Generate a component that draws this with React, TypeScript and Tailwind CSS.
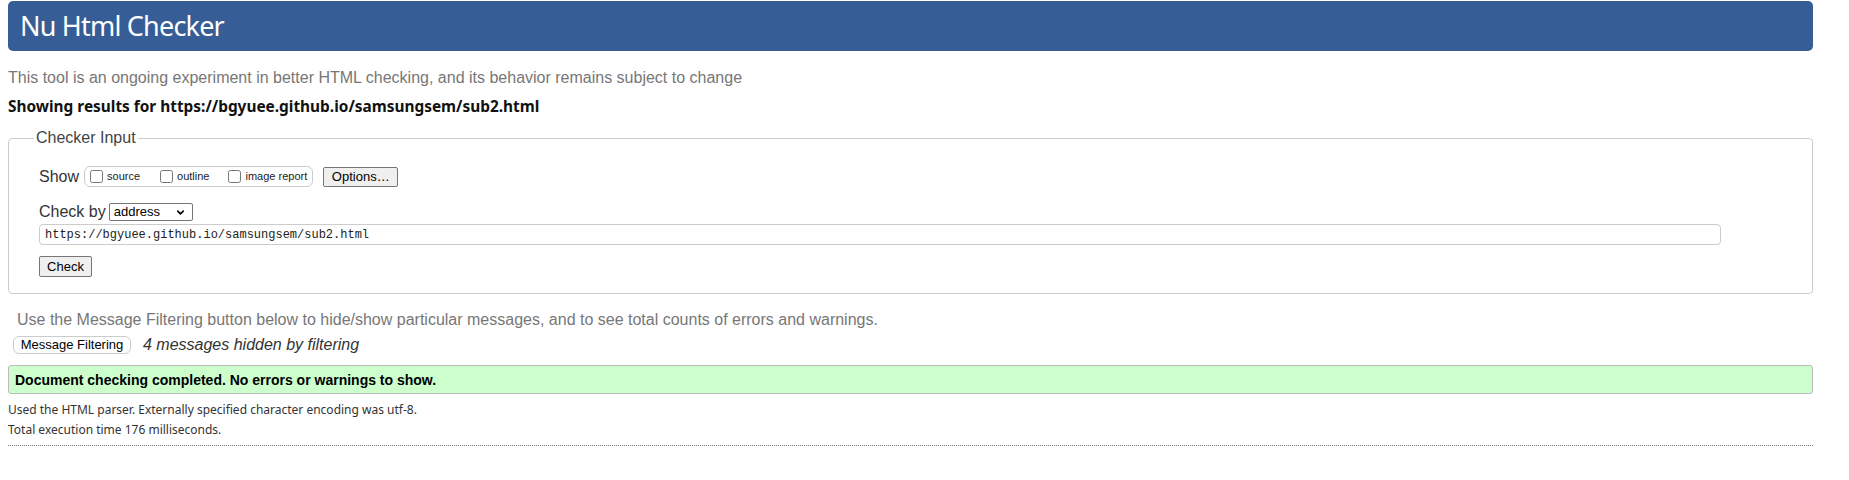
import { ChevronDown } from "lucide-react";

const arial = "font-['Liberation_Sans',Arial,sans-serif]";
const gothic = "font-['Noto_Sans','Noto_Sans_CJK_KR',sans-serif]";

function Box({ label }: { label: string }) {
  return (
    <label className="flex items-center">
      <input type="checkbox" className="m-0 h-[13px] w-[13px]" />
      <span className="ml-[4px] text-[11px] leading-[13px] text-[#222]">{label}</span>
    </label>
  );
}

export default function App() {
  return (
    <div className={`${arial} ml-2 w-[1805px] pt-px text-[#333]`}>
      <h1
        className={`${gothic} flex h-[50px] items-center rounded-[5px] bg-[#365d95] pl-[12px] text-[27px] font-normal tracking-[-0.8px] text-white`}
      >
        Nu Html Checker
      </h1>

      <p className="mt-[18px] text-[16px] leading-[18px] text-[#777]">
        This tool is an ongoing experiment in better HTML checking, and its behavior remains subject to change
      </p>
      <p className={`${gothic} mt-[10px] text-[15.4px] font-bold leading-[20px] text-[#111]`}>
        Showing results for https://bgyuee.github.io/samsungsem/sub2.html
      </p>

      <fieldset className="mt-[12px] rounded-[4px] border border-[#ccc] pb-[16px] pl-[30px]">
        <legend className="ml-[-5px] px-[2px] text-[16px] leading-[18px] text-[#444]">Checker Input</legend>

        <div className="mt-[19px] flex h-[21px] items-center">
          <span className="text-[16px] leading-[18px] text-[#333]">Show</span>
          <div className="ml-[5px] flex h-[21px] items-center rounded-[6px] border border-[#ccc] pl-[5px] pr-[5px]">
            <Box label="source" />
            <div className="ml-[20px]">
              <Box label="outline" />
            </div>
            <div className="ml-[19px]">
              <Box label="image report" />
            </div>
          </div>
          <button className="ml-[10px] h-[20px] w-[75px] rounded-[2px] border border-[#767676] bg-[#efefef] text-[13px] leading-[16px] text-black">
            Options…
          </button>
        </div>

        <div className="mt-[15px] flex h-[19px] items-center">
          <span className="text-[16px] leading-[18px] text-[#333]">Check by</span>
          <div className="relative ml-[3px] flex h-[18px] w-[84px] items-center rounded-[2px] border border-[#767676] pl-[4px] text-[13px] leading-[16px] text-black">
            address
            <ChevronDown className="absolute right-[6px] top-[3px] h-[11px] w-[11px]" strokeWidth={3.5} />
          </div>
        </div>

        <div className="mt-[3px] flex h-[21px] w-[1682px] items-center rounded-[4px] border border-[#ccc] pl-[5px] font-['Liberation_Mono',monospace] text-[12px] leading-[16px] text-[#222]">
          https://bgyuee.github.io/samsungsem/sub2.html
        </div>

        <button className="mt-[11px] block h-[21px] w-[53px] rounded-[2px] border border-[#767676] bg-[#efefef] text-[13px] leading-[16px] text-black">
          Check
        </button>
      </fieldset>

      <p className="mt-[17px] pl-[9px] text-[16px] leading-[18px] text-[#777]">
        Use the Message Filtering button below to hide/show particular messages, and to see total counts of errors and warnings.
      </p>

      <div className="mt-[7px] flex items-center pl-[5px]">
        <button className="h-[18px] w-[118px] rounded-[6px] border border-[#ccc] bg-white text-[13px] leading-[16px] text-black">
          Message Filtering
        </button>
        <span className="ml-[12px] text-[16px] leading-[18px] italic text-[#333]">4 messages hidden by filtering</span>
      </div>

      <div className="mt-[11px] flex h-[29px] items-center rounded-[3px] border border-[#bbb] bg-[#ccffcc] pl-[6px] text-[14px] font-bold leading-[16px] text-black">
        Document checking completed. No errors or warnings to show.
      </div>

      <div className={`${gothic} mt-[6px] text-[12px] leading-[20px] text-[#333]`}>
        <p>Used the HTML parser. Externally specified character encoding was utf-8.</p>
        <p>Total execution time 176 milliseconds.</p>
      </div>

      <div className="mt-[5px] border-t border-dotted border-[#777]" />
    </div>
  );
}
